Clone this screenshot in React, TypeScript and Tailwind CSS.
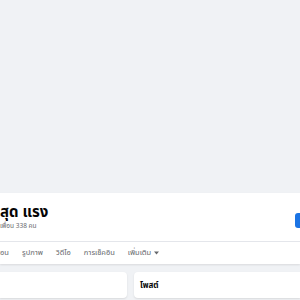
const tabs = ["อน", "รูปภาพ", "วิดีโอ", "การเช็คอิน"];

export default function App() {
  return (
    <div
      className="w-[300px] h-[300px] overflow-hidden bg-[#f0f2f5] flex flex-col"
      style={{ fontFamily: '"Noto Sans", "Noto Sans Thai", Roboto, sans-serif' }}
    >
      {/* cover area */}
      <div className="h-[193px] shrink-0" />

      {/* profile header */}
      <div className="bg-white shrink-0 shadow-[0_1px_2px_rgba(0,0,0,0.1)]">
        <div className="h-[49px] flex items-start justify-between border-b border-[#e4e6eb]">
          <div className="pt-[9px] leading-none">
            <div className="text-[15px] font-bold text-[#050505] leading-[18px]">สุด แรง</div>
            <div className="mt-[3px] text-[6.5px] text-[#65676b] whitespace-nowrap">เพื่อน 338 คน</div>
          </div>
          <div className="mt-[20px] w-[20px] h-[15px] -mr-[15px] rounded-[3px] bg-[#1b74e4]" />
        </div>
        <div className="h-[22px] flex items-center text-[7.5px] text-[#65676b]">
          {tabs.map((t, i) => (
            <span key={t} className={i === 0 ? "w-[22px]" : "pr-[13px]"}>
              {t}
            </span>
          ))}
          <span className="flex items-center gap-[3px]">
            เพิ่มเติม
            <svg width="5" height="4" viewBox="0 0 10 6">
              <path d="M0 0h10L5 6z" fill="#65676b" />
            </svg>
          </span>
        </div>
      </div>

      {/* body */}
      <div className="flex gap-[7px] pt-[8px]">
        <div className="w-[127px] h-[26px] bg-white rounded-r-[4px] shadow-[0_1px_2px_rgba(0,0,0,0.1)]" />
        <div className="flex-1 h-[26px] bg-white rounded-l-[4px] shadow-[0_1px_2px_rgba(0,0,0,0.1)] px-[6px] flex items-center">
          <span className="text-[8px] font-bold text-[#050505]">โพสต์</span>
        </div>
      </div>
    </div>
  );
}
